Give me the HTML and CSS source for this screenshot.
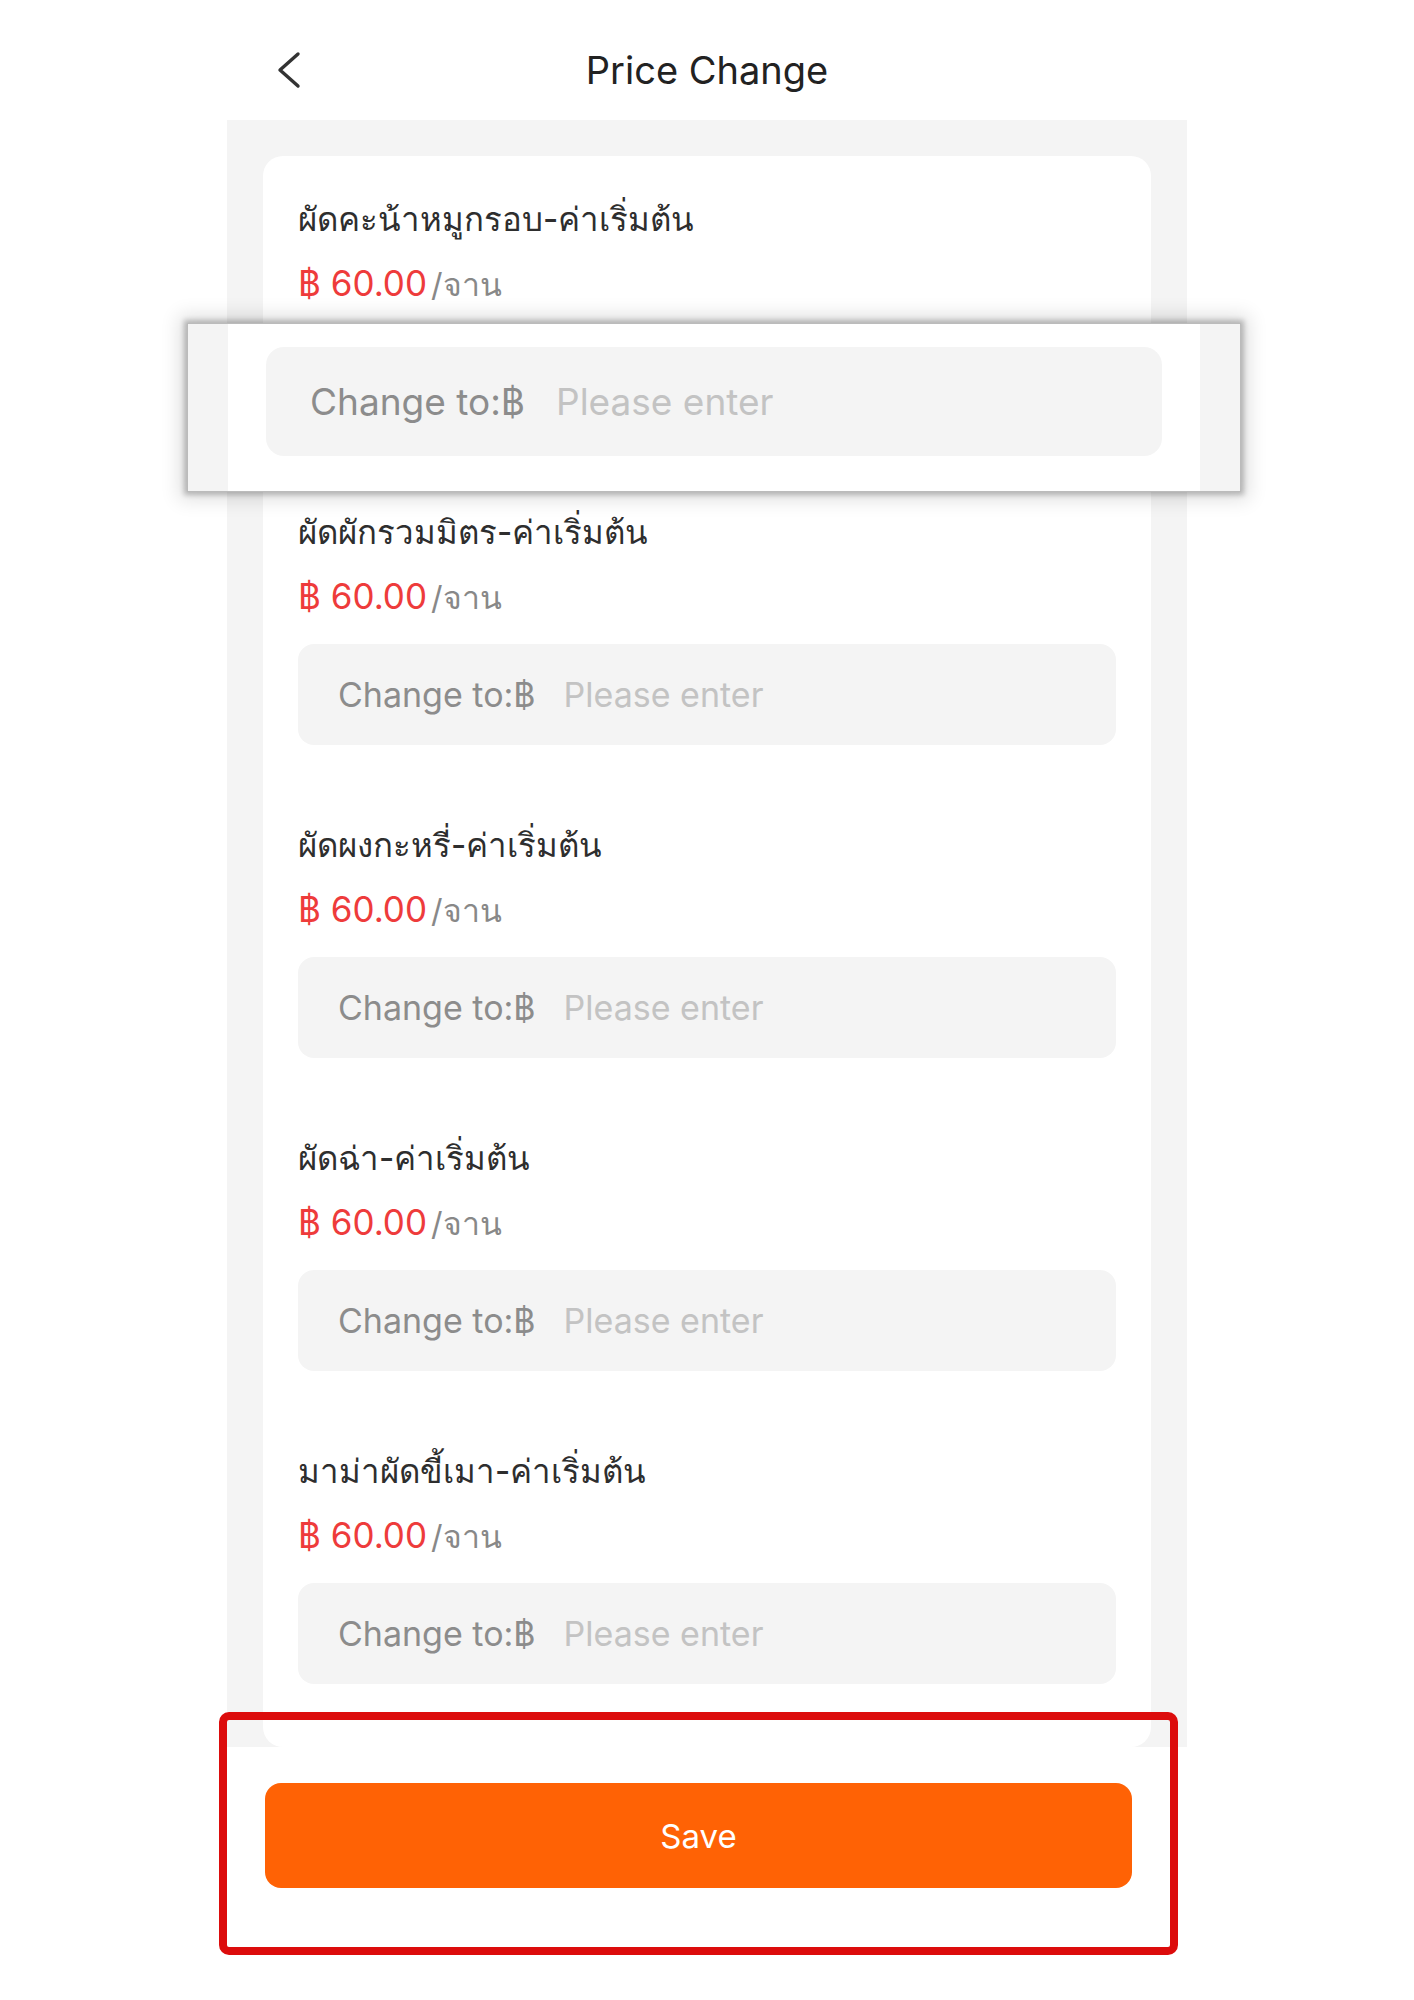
FILE: index.html
```html
<!DOCTYPE html>
<html lang="th">
<head>
  <meta charset="UTF-8">
  <meta name="viewport" content="width=device-width, initial-scale=1.0">
  <title>Price Change</title>
  <link rel="stylesheet" href="styles.css">
</head>
<body>
  <div class="screen">
    <header class="topbar">
      <button class="back" aria-label="Back">
        <svg width="26" height="38" viewBox="0 0 26 38">
          <polyline points="22,3 4,19 22,35" fill="none" stroke="#333" stroke-width="3.4" stroke-linecap="round" stroke-linejoin="round"/>
        </svg>
      </button>
      <h1>Price Change</h1>
      <span></span>
    </header>

    <main class="panel">
      <div class="card">
        <div class="item">
          <div class="item-name">ผัดคะน้าหมูกรอบ-ค่าเริ่มต้น</div>
          <div class="price"><span class="amount">฿ 60.00</span><span class="unit">/จาน</span></div>
          <!-- shown magnified in .lens -->
          <label class="field covered"><span class="field-label">Change to:฿</span><input type="text" placeholder="Please enter"></label>
        </div>
        <div class="item">
          <div class="item-name">ผัดผักรวมมิตร-ค่าเริ่มต้น</div>
          <div class="price"><span class="amount">฿ 60.00</span><span class="unit">/จาน</span></div>
          <label class="field"><span class="field-label">Change to:฿</span><input type="text" placeholder="Please enter"></label>
        </div>
        <div class="item">
          <div class="item-name">ผัดผงกะหรี่-ค่าเริ่มต้น</div>
          <div class="price"><span class="amount">฿ 60.00</span><span class="unit">/จาน</span></div>
          <label class="field"><span class="field-label">Change to:฿</span><input type="text" placeholder="Please enter"></label>
        </div>
        <div class="item">
          <div class="item-name">ผัดฉ่า-ค่าเริ่มต้น</div>
          <div class="price"><span class="amount">฿ 60.00</span><span class="unit">/จาน</span></div>
          <label class="field"><span class="field-label">Change to:฿</span><input type="text" placeholder="Please enter"></label>
        </div>
        <div class="item">
          <div class="item-name">มาม่าผัดขี้เมา-ค่าเริ่มต้น</div>
          <div class="price"><span class="amount">฿ 60.00</span><span class="unit">/จาน</span></div>
          <label class="field"><span class="field-label">Change to:฿</span><input type="text" placeholder="Please enter"></label>
        </div>
      </div>
    </main>

    <footer class="footer">
      <button class="save">Save</button>
      <div class="mark"></div>
    </footer>

    <!-- magnified first input -->
    <div class="lens">
      <div class="lens-inner">
        <label class="field field-lg"><span class="field-label">Change to:฿</span><input type="text" placeholder="Please enter"></label>
      </div>
    </div>
  </div>
</body>
</html>
```

FILE: styles.css
```css
body {
  margin: 0;
  background: #fff;
  font-family: "Inter", "Noto Sans", sans-serif;
  color: #333;
}

.screen {
  position: relative;
  width: 1414px;
  height: 2000px;
  overflow: hidden;
}

.topbar {
  display: grid;
  grid-template-columns: 1fr auto 1fr;
  align-items: center;
  height: 100px;
  padding-top: 20px;
}

.topbar h1 {
  margin: 0;
  font-size: 38px;
  font-weight: 400;
  color: #222;
}

.back {
  justify-self: start;
  margin-left: 276px;
  padding: 0;
  border: none;
  background: none;
  display: flex;
}

.panel {
  width: 960px;
  margin: 0 auto;
  padding: 36px 36px 0;
  box-sizing: border-box;
  background: #f4f4f4;
}

.card {
  background: #fff;
  border-radius: 20px;
  padding: 39px 35px 63px;
}

.item + .item {
  margin-top: 76px;
}

.item-name {
  height: 48px;
  font-size: 33px;
  font-weight: 500;
  line-height: 48px;
  color: #2e2e2e;
  white-space: nowrap;
}

.price {
  display: flex;
  align-items: baseline;
  height: 48px;
  margin-top: 16px;
  line-height: 48px;
}

.amount {
  font-size: 35px;
  color: #ee3b3b;
}

.unit {
  margin-left: 4px;
  font-size: 32px;
  color: #888;
}

.field {
  display: flex;
  align-items: center;
  margin-top: 24px;
  height: 101px;
  padding-left: 40px;
  border-radius: 16px;
  background: #f4f4f4;
  font-size: 34px;
}

.field.covered {
  visibility: hidden;
}

.field-label {
  color: #8c8c8c;
}

.field input {
  flex: 1;
  min-width: 0;
  margin-left: 28px;
  padding: 0;
  border: none;
  background: transparent;
  font: inherit;
  color: #333;
  outline: none;
}

.field input::placeholder {
  color: #c3c3c3;
}

.footer {
  position: relative;
  width: 960px;
  margin: 0 auto;
  padding: 36px 55px 0 38px;
  box-sizing: border-box;
}

.save {
  display: block;
  width: 100%;
  height: 105px;
  border: none;
  border-radius: 16px;
  background: #ff6205;
  color: #fff;
  font-family: inherit;
  font-size: 33px;
}

.mark {
  position: absolute;
  top: -35px;
  left: -8px;
  width: 959px;
  height: 243px;
  box-sizing: border-box;
  border: 8px solid #dc0c0c;
  border-radius: 10px;
}

.lens {
  position: absolute;
  top: 324px;
  left: 188px;
  width: 1052px;
  height: 167px;
  box-sizing: border-box;
  padding: 0 40px;
  background: #f4f4f4;
  box-shadow: 0 0 0 1px #bbb, 0 0 5px 4px rgba(0, 0, 0, 0.22), 0 0 18px 9px rgba(0, 0, 0, 0.12);
}

.lens-inner {
  height: 100%;
  box-sizing: border-box;
  padding: 23px 38px 0;
  background: #fff;
}

.field-lg {
  margin-top: 0;
  height: 109px;
  padding-left: 44px;
  border-radius: 18px;
  font-size: 37px;
}

.field-lg input {
  margin-left: 31px;
}
```
